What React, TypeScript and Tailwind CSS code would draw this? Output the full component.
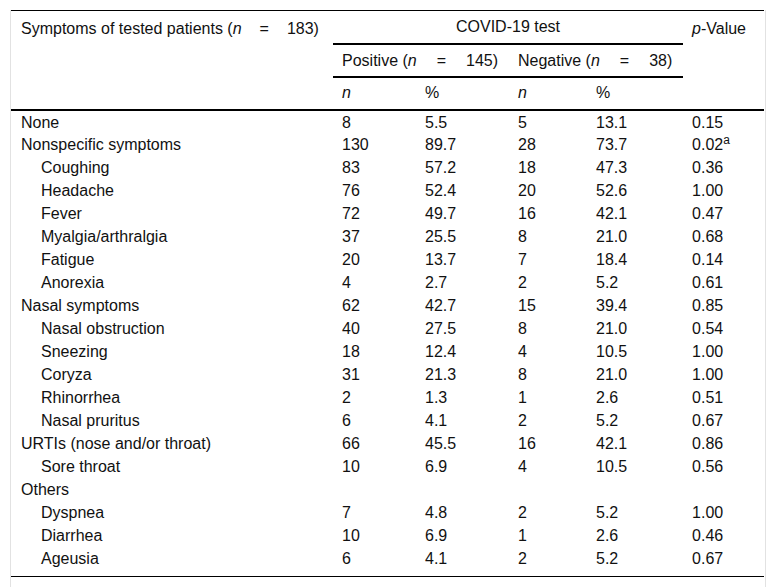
type Row = {
  label: string;
  sub?: boolean;
  pn?: string;
  pp?: string;
  nn?: string;
  np?: string;
  p?: string;
  sup?: string;
};

const rows: Row[] = [
  { label: "None", pn: "8", pp: "5.5", nn: "5", np: "13.1", p: "0.15" },
  { label: "Nonspecific symptoms", pn: "130", pp: "89.7", nn: "28", np: "73.7", p: "0.02", sup: "a" },
  { label: "Coughing", sub: true, pn: "83", pp: "57.2", nn: "18", np: "47.3", p: "0.36" },
  { label: "Headache", sub: true, pn: "76", pp: "52.4", nn: "20", np: "52.6", p: "1.00" },
  { label: "Fever", sub: true, pn: "72", pp: "49.7", nn: "16", np: "42.1", p: "0.47" },
  { label: "Myalgia/arthralgia", sub: true, pn: "37", pp: "25.5", nn: "8", np: "21.0", p: "0.68" },
  { label: "Fatigue", sub: true, pn: "20", pp: "13.7", nn: "7", np: "18.4", p: "0.14" },
  { label: "Anorexia", sub: true, pn: "4", pp: "2.7", nn: "2", np: "5.2", p: "0.61" },
  { label: "Nasal symptoms", pn: "62", pp: "42.7", nn: "15", np: "39.4", p: "0.85" },
  { label: "Nasal obstruction", sub: true, pn: "40", pp: "27.5", nn: "8", np: "21.0", p: "0.54" },
  { label: "Sneezing", sub: true, pn: "18", pp: "12.4", nn: "4", np: "10.5", p: "1.00" },
  { label: "Coryza", sub: true, pn: "31", pp: "21.3", nn: "8", np: "21.0", p: "1.00" },
  { label: "Rhinorrhea", sub: true, pn: "2", pp: "1.3", nn: "1", np: "2.6", p: "0.51" },
  { label: "Nasal pruritus", sub: true, pn: "6", pp: "4.1", nn: "2", np: "5.2", p: "0.67" },
  { label: "URTIs (nose and/or throat)", pn: "66", pp: "45.5", nn: "16", np: "42.1", p: "0.86" },
  { label: "Sore throat", sub: true, pn: "10", pp: "6.9", nn: "4", np: "10.5", p: "0.56" },
  { label: "Others" },
  { label: "Dyspnea", sub: true, pn: "7", pp: "4.8", nn: "2", np: "5.2", p: "1.00" },
  { label: "Diarrhea", sub: true, pn: "10", pp: "6.9", nn: "1", np: "2.6", p: "0.46" },
  { label: "Ageusia", sub: true, pn: "6", pp: "4.1", nn: "2", np: "5.2", p: "0.67" },
];

function Count({ total, wide }: { total: string; wide?: boolean }) {
  return (
    <>
      (<i>n</i>
      <span className={wide ? "mx-[20px]" : "mx-[18px]"}>=</span>
      {total})
    </>
  );
}

export default function App() {
  return (
    <div className="min-h-[588px] bg-white pt-[10px] font-['Liberation_Sans',Arial,sans-serif] text-[#111]">
      <div className="ml-[10px] w-[756px] border-x border-[#e2e2e2] pb-[10px]">
        <table className="w-[753px] table-fixed border-collapse text-[16px] leading-[20px]">
          <colgroup>
            <col className="w-[322px]" />
            <col className="w-[83px]" />
            <col className="w-[93px]" />
            <col className="w-[78px]" />
            <col className="w-[96px]" />
            <col className="w-[81px]" />
          </colgroup>
          <thead>
            <tr className="border-t border-black">
              <th
                rowSpan={3}
                className="border-b-2 border-black pl-[10px] pt-[8px] text-left align-top font-normal"
              >
                Symptoms of tested patients <Count total="183" />
              </th>
              <th colSpan={4} className="h-[33px] border-b-2 border-black pt-[1px] text-center font-normal">
                COVID-19 test
              </th>
              <th
                rowSpan={3}
                className="border-b-2 border-black pl-[9px] pt-[8px] text-left align-top font-normal"
              >
                <i>p</i>-Value
              </th>
            </tr>
            <tr>
              <th colSpan={2} className="h-[33px] border-b-2 border-black pl-[9px] pt-[2px] text-left font-normal">
                Positive <Count total="145" wide />
              </th>
              <th colSpan={2} className="h-[33px] border-b-2 border-black pl-[9px] pt-[2px] text-left font-normal">
                Negative <Count total="38" wide />
              </th>
            </tr>
            <tr>
              <th className="h-[33px] border-b-2 border-black pl-[9px] text-left font-normal italic">n</th>
              <th className="h-[33px] border-b-2 border-black pl-[9px] text-left font-normal">%</th>
              <th className="h-[33px] border-b-2 border-black pl-[9px] text-left font-normal italic">n</th>
              <th className="h-[33px] border-b-2 border-black pl-[9px] text-left font-normal">%</th>
            </tr>
          </thead>
          <tbody className="border-b border-black">
            {rows.map((r, i) => {
              const last = i === rows.length - 1;
              const h = last ? "h-[30px] pt-[2px] pb-[7px]" : "h-[23px] pt-[2px]";
              const cell = `${h} pl-[9px]`;
              return (
                <tr key={r.label}>
                  <td className={`${h} ${r.sub ? "pl-[30px]" : "pl-[10px]"}`}>{r.label}</td>
                  <td className={cell}>{r.pn}</td>
                  <td className={cell}>{r.pp}</td>
                  <td className={cell}>{r.nn}</td>
                  <td className={cell}>{r.np}</td>
                  <td className={cell}>
                    {r.p}
                    {r.sup && <sup className="text-[12px]">{r.sup}</sup>}
                  </td>
                </tr>
              );
            })}
          </tbody>
        </table>
      </div>
    </div>
  );
}
